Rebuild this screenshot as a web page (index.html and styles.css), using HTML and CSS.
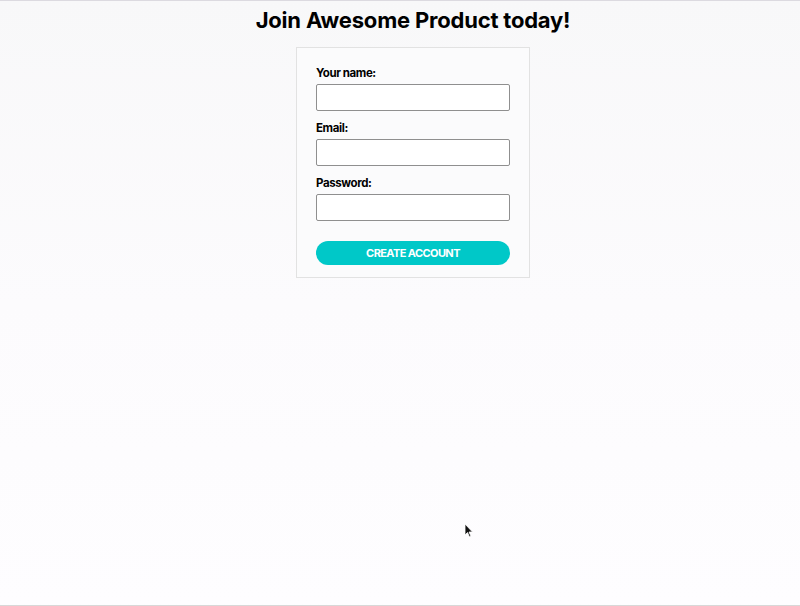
FILE: index.html
```html
<!DOCTYPE html>
<html lang="en">
<head>
<meta charset="utf-8">
<title>Join Awesome Product</title>
<link rel="stylesheet" href="styles.css">
</head>
<body>
<main class="page">
  <h1 class="title">Join Awesome Product today!</h1>
  <form class="card">
    <label class="field">
      <span class="label">Your name:</span>
      <input class="input" type="text">
    </label>
    <label class="field">
      <span class="label">Email:</span>
      <input class="input" type="email">
    </label>
    <label class="field">
      <span class="label">Password:</span>
      <input class="input" type="password">
    </label>
    <button class="btn" type="button">CREATE ACCOUNT</button>
  </form>
</main>
<svg class="cursor" width="10" height="16" viewBox="0 0 10 16"><path d="M1 1 L1 12 L3.5 9.5 L5.5 14 L7 13.3 L5 9 L8.5 9 Z" fill="#111" stroke="#fff" stroke-width="0.8"/></svg>
</body>
</html>
```
FILE: styles.css
```css
* { box-sizing: border-box; }
html, body { margin: 0; padding: 0; }
body {
  height: 606px;
  border-top: 1px solid #dcdae0;
  border-bottom: 1px solid #d8d8d8;
  background: linear-gradient(#f8f8f9, #fcfbfd 50%, #fefdff);
  font-family: Inter, "Liberation Sans", sans-serif;
  color: #000;
  position: relative;
  overflow: hidden;
}
.page {
  display: flex;
  flex-direction: column;
  align-items: center;
  padding-left: 26px;
}
.title {
  margin: 4px 0 0;
  font-size: 22px;
  line-height: 30px;
  font-weight: 700;
  letter-spacing: -0.2px;
}
.card {
  margin-top: 12px;
  width: 234px;
  border: 1px solid #e2e2e2;
  background: #fbfbfc;
  padding: 17px 19px 12px;
  display: flex;
  flex-direction: column;
}
.field {
  display: flex;
  flex-direction: column;
}
.label {
  font-size: 11.5px;
  font-weight: 700;
  line-height: 16px;
  letter-spacing: -0.4px;
  margin-bottom: 3px;
}
.input {
  width: 194px;
  height: 27px;
  margin: 0 0 9px;
  border: 1px solid #8f8f8f;
  border-radius: 2px;
  background: #fff;
  padding: 0 4px;
  font: inherit;
}
.btn {
  margin-top: 11px;
  height: 24px;
  width: 194px;
  border: none;
  border-radius: 12px;
  background: #00c8c8;
  color: #fff;
  font-family: inherit;
  font-size: 11px;
  font-weight: 700;
  letter-spacing: -0.6px;
  padding: 0;
}
.cursor {
  position: absolute;
  left: 464px;
  top: 522px;
}
```
